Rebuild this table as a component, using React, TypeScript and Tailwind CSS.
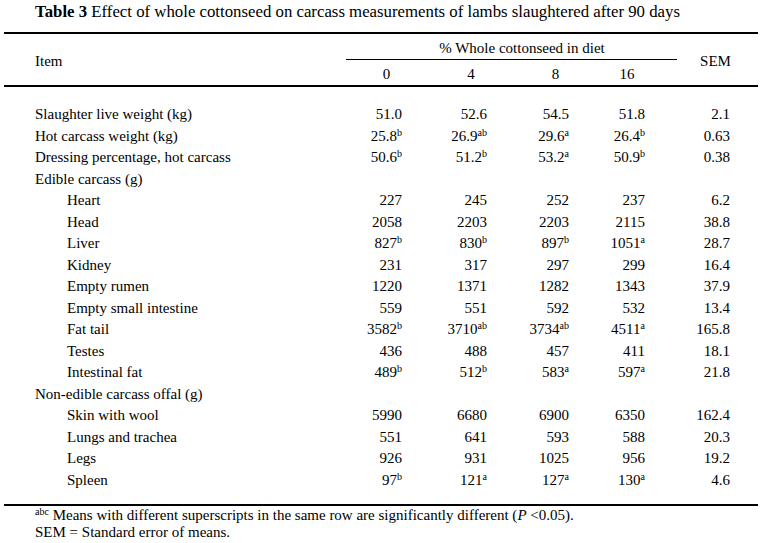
import React from "react";

type Row = { label: string; indent?: boolean; vals?: string[] };

const rows: Row[] = [
  { label: "Slaughter live weight (kg)", vals: ["51.0", "52.6", "54.5", "51.8", "2.1"] },
  { label: "Hot carcass weight (kg)", vals: ["25.8^b", "26.9^ab", "29.6^a", "26.4^b", "0.63"] },
  { label: "Dressing percentage, hot carcass", vals: ["50.6^b", "51.2^b", "53.2^a", "50.9^b", "0.38"] },
  { label: "Edible carcass (g)" },
  { label: "Heart", indent: true, vals: ["227", "245", "252", "237", "6.2"] },
  { label: "Head", indent: true, vals: ["2058", "2203", "2203", "2115", "38.8"] },
  { label: "Liver", indent: true, vals: ["827^b", "830^b", "897^b", "1051^a", "28.7"] },
  { label: "Kidney", indent: true, vals: ["231", "317", "297", "299", "16.4"] },
  { label: "Empty rumen", indent: true, vals: ["1220", "1371", "1282", "1343", "37.9"] },
  { label: "Empty small intestine", indent: true, vals: ["559", "551", "592", "532", "13.4"] },
  { label: "Fat tail", indent: true, vals: ["3582^b", "3710^ab", "3734^ab", "4511^a", "165.8"] },
  { label: "Testes", indent: true, vals: ["436", "488", "457", "411", "18.1"] },
  { label: "Intestinal fat", indent: true, vals: ["489^b", "512^b", "583^a", "597^a", "21.8"] },
  { label: "Non-edible carcass offal (g)" },
  { label: "Skin with wool", indent: true, vals: ["5990", "6680", "6900", "6350", "162.4"] },
  { label: "Lungs and trachea", indent: true, vals: ["551", "641", "593", "588", "20.3"] },
  { label: "Legs", indent: true, vals: ["926", "931", "1025", "956", "19.2"] },
  { label: "Spleen", indent: true, vals: ["97^b", "121^a", "127^a", "130^a", "4.6"] },
];

const padR = ["pr-[25px]", "pr-[28px]", "pr-[27px]", "pr-[32px]", "pr-[28px]"];

function Val({ v }: { v: string }) {
  const [n, s] = v.split("^");
  return (
    <span>
      {n}
      {s ? <sup className="text-[10px] relative -top-[5px]">{s}</sup> : null}
    </span>
  );
}

export default function App() {
  return (
    <div className="w-[762px] h-[543px] bg-white text-black font-['Liberation_Serif',serif] text-[15px] overflow-hidden">
      <div className="pl-[35px] pt-[2px] h-[20px] leading-[20px] text-[16.8px] whitespace-nowrap">
        <span className="font-bold">Table 3</span> Effect of whole cottonseed on carcass measurements of lambs slaughtered after 90 days
      </div>
      <div className="ml-[4px] w-[754px] mt-[12px]">
        <div className="h-[2px] bg-black" />
        <div className="grid grid-cols-[342px_81px_88px_81px_81px_81px] grid-rows-[25px_1px_25px]">
          <div className="row-span-3 flex items-center pl-[31px] pt-[3px]">Item</div>
          <div className="col-span-4 flex items-center justify-center pl-[21px] pt-[3px]">% Whole cottonseed in diet</div>
          <div className="row-span-3 flex items-center justify-center pr-[4px] pt-[3px]">SEM</div>
          <div className="col-span-4 bg-black" />
          <div className="flex items-center justify-center pt-[3px]">0</div>
          <div className="flex items-center justify-center pt-[3px]">4</div>
          <div className="flex items-center justify-center pt-[3px]">8</div>
          <div className="flex items-center justify-center pr-[19px] pt-[3px]">16</div>
        </div>
        <div className="h-[2px] bg-black" />
        <div className="pt-[17px] pb-[13px]">
          {rows.map((r, i) => (
            <div key={i} className="grid grid-cols-[342px_81px_88px_81px_81px_81px] h-[21.5px] items-center leading-[21.5px] whitespace-nowrap">
              <div className={r.indent ? "pl-[63px]" : "pl-[31px]"}>{r.label}</div>
              {r.vals
                ? r.vals.map((v, j) => (
                    <div key={j} className={`text-right ${padR[j]}`}>
                      <Val v={v} />
                    </div>
                  ))
                : null}
            </div>
          ))}
        </div>
        <div className="h-[2px] bg-black" />
      </div>
      <div className="pl-[35px] leading-[16.5px] pt-[1px]">
        <div className="whitespace-nowrap">
          <sup className="text-[10px] relative -top-[5px]">abc</sup> Means with different superscripts in the same row are significantly different (<i>P</i> &lt;0.05).
        </div>
        <div>SEM = Standard error of means.</div>
      </div>
    </div>
  );
}
